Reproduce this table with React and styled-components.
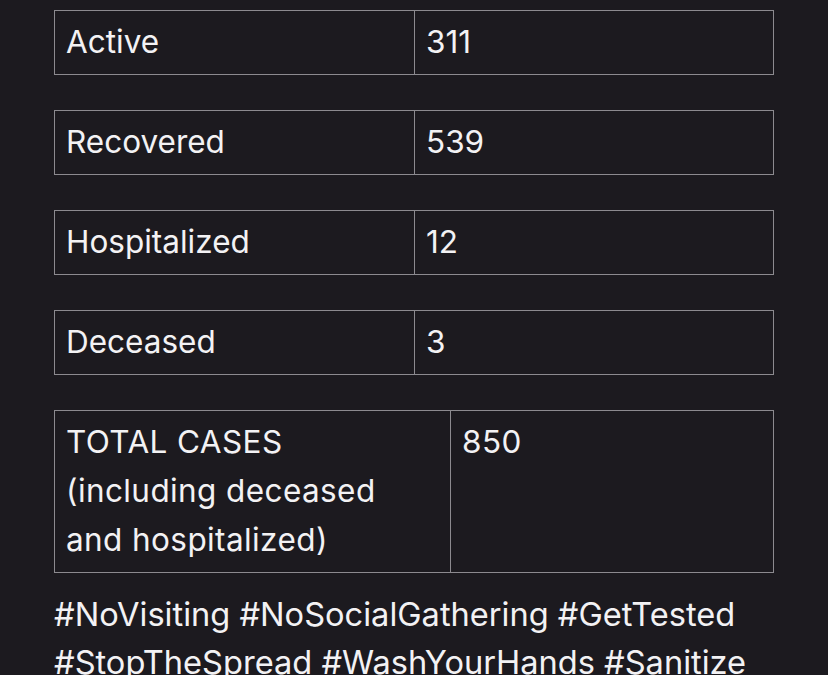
import React from 'react';
import styled, { createGlobalStyle } from 'styled-components';

const GlobalStyle = createGlobalStyle`
  html, body {
    margin: 0;
    padding: 0;
    background: #1c1a1f;
  }
  body {
    font-family: Inter, "Liberation Sans", sans-serif;
    color: #f3f2f4;
  }
`;

const rows = [
  { label: 'Active', value: '311' },
  { label: 'Recovered', value: '539' },
  { label: 'Hospitalized', value: '12' },
  { label: 'Deceased', value: '3' },
];

const Page = styled.main`
  width: 828px;
  height: 675px;
  overflow: hidden;
  box-sizing: border-box;
  padding: 10px 0 0 54px;
  display: flex;
  flex-direction: column;
  gap: 35px;
`;

const Table = styled.div`
  width: 720px;
  box-sizing: border-box;
  border: 1px solid #8c8a8f;
  display: grid;
  grid-template-columns: ${(props) => props.split || '359px'} 1fr;
  min-height: ${(props) => props.height || '65px'};
`;

const Cell = styled.div`
  padding: ${(props) => (props.tall ? '6px 12px 0 11px' : '11px 12px 0 11px')};
  font-size: 31.5px;
  line-height: ${(props) => (props.tall ? '49px' : '40px')};
  letter-spacing: ${(props) => (props.tall ? '0.4px' : '0')};
  & + & {
    border-left: 1px solid #8c8a8f;
  }
`;

const Tags = styled.p`
  margin: -18px 0 0 0;
  font-size: 32.6px;
  line-height: 48px;
  width: 760px;
  white-space: nowrap;
`;

export default function App() {
  return (
    <>
      <GlobalStyle />
      <Page>
        {rows.map((row) => (
          <Table key={row.label}>
            <Cell>{row.label}</Cell>
            <Cell>{row.value}</Cell>
          </Table>
        ))}
        <Table split='395px' height='163px'>
          <Cell tall>
            TOTAL CASES
            <br />
            (including deceased
            <br />
            and hospitalized)
          </Cell>
          <Cell tall>850</Cell>
        </Table>
        <Tags>
          #NoVisiting #NoSocialGathering #GetTested
          <br />
          #StopTheSpread #WashYourHands #Sanitize
        </Tags>
      </Page>
    </>
  );
}
